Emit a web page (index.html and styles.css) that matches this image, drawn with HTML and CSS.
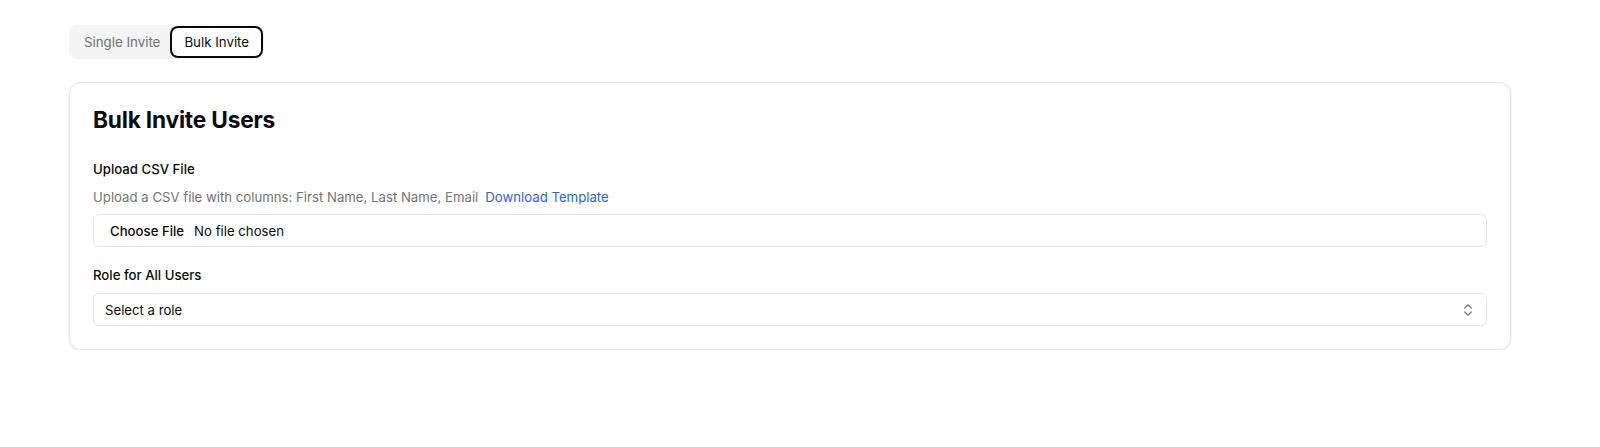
FILE: index.html
```html
<!DOCTYPE html>
<html lang="en">
<head>
<meta charset="utf-8">
<title>Invite Users</title>
<link rel="stylesheet" href="styles.css">
</head>
<body>
<main class="page">
  <div class="tabs" role="tablist">
    <button class="tab" role="tab">Single Invite</button>
    <button class="tab tab-active" role="tab">Bulk Invite</button>
  </div>

  <section class="card">
    <h2 class="card-title">Bulk Invite Users</h2>
    <form class="form">
      <div class="field">
        <label class="label" for="csv">Upload CSV File</label>
        <p class="hint">Upload a CSV file with columns: First Name, Last Name, Email<a class="link" href="#">Download Template</a></p>
        <input class="file-input" id="csv" type="file" accept=".csv">
      </div>
      <div class="field">
        <label class="label" for="role">Role for All Users</label>
        <div class="select" id="role">
          <span class="select-value">Select a role</span>
          <svg class="select-icon" viewBox="0 0 24 24" width="16" height="16" fill="none" stroke="currentColor" stroke-width="2" stroke-linecap="round" stroke-linejoin="round"><path d="m7 15 5 5 5-5"/><path d="m7 9 5-5 5 5"/></svg>
        </div>
      </div>
    </form>
  </section>
</main>
</body>
</html>
```

FILE: styles.css
```css
* {
  box-sizing: border-box;
}

html, body {
  margin: 0;
  background: #ffffff;
}

body {
  font-family: Inter, "Noto Sans", "Liberation Sans", sans-serif;
  color: #0a0a0a;
  font-size: 13.2px;
  line-height: 20px;
}

.page {
  padding: 25px 89px 0 69px;
}

/* tab switcher */
.tabs {
  display: inline-flex;
  align-items: stretch;
  height: 34px;
  padding: 3px;
  background: #f4f4f5;
  border-radius: 8px;
}

.tab {
  font: inherit;
  font-size: 13.3px;
  padding: 0 12px;
  border: 0;
  border-radius: 6px;
  background: transparent;
  color: #71717a;
  cursor: pointer;
}

.tab-active {
  background: #ffffff;
  color: #0a0a0a;
  box-shadow: 0 0 0 2px #0a0a0a;
}

/* card */
.card {
  margin-top: 23px;
  border: 1px solid #e5e5e5;
  border-radius: 12px;
  box-shadow: 0 1px 3px rgba(0, 0, 0, 0.08), 0 1px 2px rgba(0, 0, 0, 0.04);
  padding: 23px 23px 23px;
}

.card-title {
  margin: 0 0 25px;
  font-size: 22.7px;
  line-height: 28px;
  font-weight: 650;
  letter-spacing: -0.2px;
}

.form {
  display: flex;
  flex-direction: column;
  gap: 18px;
}

.field {
  display: flex;
  flex-direction: column;
  gap: 8px;
}

.label {
  font-weight: 500;
}

.hint {
  margin: 0 0 -1px;
  color: #737373;
}

.link {
  margin-left: 7px;
  color: #2563eb;
  text-decoration: none;
}

/* file picker */
.file-input {
  display: block;
  width: 100%;
  height: 33px;
  padding: 0 12px 0 10px;
  border: 1px solid #e5e5e5;
  border-radius: 6px;
  font: inherit;
  color: #0a0a0a;
  background: #ffffff;
}

.file-input::file-selector-button {
  font: inherit;
  font-weight: 500;
  border: 0;
  background: transparent;
  color: #0a0a0a;
  padding: 0 6px;
  margin-right: 4px;
  height: 31px;
}

/* role dropdown */
.select {
  display: flex;
  align-items: center;
  justify-content: space-between;
  height: 33px;
  padding: 0 10px 0 11px;
  border: 1px solid #e5e5e5;
  border-radius: 6px;
  box-shadow: 0 1px 2px rgba(0, 0, 0, 0.03);
}

.select-icon {
  color: #0a0a0a;
  opacity: 0.5;
}
```
